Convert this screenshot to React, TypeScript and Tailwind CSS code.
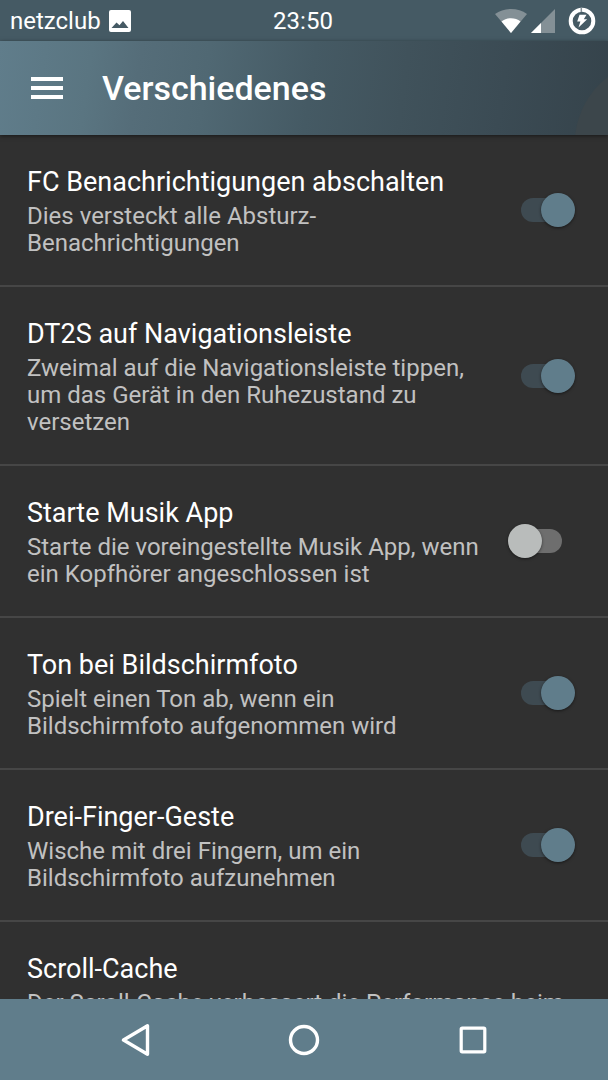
import { useState } from "react"

const settings = [
  {
    id: "fc",
    title: "FC Benachrichtigungen abschalten",
    summary: "Dies versteckt alle Absturz-Benachrichtigungen",
    enabled: true,
  },
  {
    id: "dt2s",
    title: "DT2S auf Navigationsleiste",
    summary:
      "Zweimal auf die Navigationsleiste tippen, um das Gerät in den Ruhezustand zu versetzen",
    enabled: true,
  },
  {
    id: "music",
    title: "Starte Musik App",
    summary:
      "Starte die voreingestellte Musik App, wenn ein Kopfhörer angeschlossen ist",
    enabled: false,
  },
  {
    id: "sound",
    title: "Ton bei Bildschirmfoto",
    summary: "Spielt einen Ton ab, wenn ein Bildschirmfoto aufgenommen wird",
    enabled: true,
  },
  {
    id: "gesture",
    title: "Drei-Finger-Geste",
    summary: "Wische mit drei Fingern, um ein Bildschirmfoto aufzunehmen",
    enabled: true,
  },
]

const StatusBar = () => {
  return (
    <div className="grid h-[41px] shrink-0 grid-cols-[1fr_auto_1fr] items-center bg-[#455a64] pr-3 pl-[10px] text-2xl">
      <div className="flex items-center gap-2">
        <span>netzclub</span>
        <svg className="size-[22px]" viewBox="0 0 22 22" aria-hidden="true">
          <path
            fill="currentColor"
            fillRule="evenodd"
            d="M2 0h18a2 2 0 0 1 2 2v18a2 2 0 0 1-2 2H2a2 2 0 0 1-2-2V2a2 2 0 0 1 2-2zM2.500 18h17l-5.500-7-3.500 4.200-3-2.700z"
          />
        </svg>
      </div>
      <span>23:50</span>
      <div className="flex items-center justify-end">
        <svg className="h-6 w-8" viewBox="0 0 32 24" aria-hidden="true">
          <path fill="#849096" d="M16 24 0 5C4.500 1.700 10 0 16 0s11.500 1.700 16 5z" />
          <path fill="#fff" d="M16 24 6.500 12.600c2.600-2.200 6-3.300 9.500-3.300s6.900 1.100 9.500 3.300z" />
        </svg>
        <svg className="ml-1 size-6" viewBox="0 0 24 24" aria-hidden="true">
          <path fill="#849096" d="M24 0v24H0z" />
          <path fill="#fff" d="M10 14v10H0z" />
        </svg>
        <svg className="ml-[13px] size-7" viewBox="0 0 28 28" aria-hidden="true">
          <circle cx="14" cy="14" r="11.300" fill="none" stroke="#fff" strokeWidth="4" />
          <path stroke="#849096" strokeWidth="1.500" d="M13.300.500v4.500" />
          <path fill="#fff" d="M11.500 7.800h7l-2.700 4.500h3.400l-8.700 8.200 1.900-6H9.200z" />
        </svg>
      </div>
    </div>
  )
}

const Header = () => {
  return (
    <header className="relative z-10 flex h-[94px] shrink-0 items-center gap-[39px] bg-[linear-gradient(98deg,#607d8b_0%,#5a7581_15%,#556d79_23%,#506873_34%,#455a64_51%,#40525b_66%,#3b4b54_82%,#35434b_100%)] px-[31px] shadow-[0_1px_4px_rgba(0,0,0,0.5)]">
      <svg
        className="absolute right-0 bottom-0 h-[58px] w-[33px]"
        viewBox="0 0 33 58"
        aria-hidden="true"
      >
        <path fill="#3c464b" d="M0 58C3 35 14 14 33 0v58z" />
      </svg>
      <button type="button" aria-label="Menü">
        <svg className="h-[22px] w-8" viewBox="0 0 32 22" aria-hidden="true">
          <path fill="#fff" d="M0 0h32v4H0zM0 9h32v4H0zM0 18h32v4H0z" />
        </svg>
      </button>
      <h1 className="text-[34px] font-medium">Verschiedenes</h1>
    </header>
  )
}

const NavigationBar = () => {
  return (
    <nav className="flex h-[81px] shrink-0 items-center justify-center gap-[137px] bg-[#607d8b]">
      <button type="button" aria-label="Zurück">
        <svg className="size-8" viewBox="0 0 32 32" aria-hidden="true">
          <path
            fill="none"
            stroke="#fff"
            strokeWidth="3.400"
            strokeLinejoin="round"
            d="M28.500 1.800v28.400L4.500 16z"
          />
        </svg>
      </button>
      <button type="button" aria-label="Startseite">
        <svg className="size-8" viewBox="0 0 32 32" aria-hidden="true">
          <circle cx="16" cy="16" r="13.500" fill="none" stroke="#fff" strokeWidth="3.400" />
        </svg>
      </button>
      <button type="button" aria-label="Übersicht">
        <svg className="size-8" viewBox="0 0 32 32" aria-hidden="true">
          <rect x="4.200" y="4.200" width="23.600" height="23.600" rx="1" fill="none" stroke="#fff" strokeWidth="3.200" />
        </svg>
      </button>
    </nav>
  )
}

const App = () => {
  const [enabled, setEnabled] = useState<Record<string, boolean>>(
    Object.fromEntries(settings.map((s) => [s.id, s.enabled]))
  )

  return (
    <div className="flex h-screen flex-col bg-[#303030] font-[Roboto,sans-serif] text-white">
      <StatusBar />
      <Header />
      <main className="min-h-0 flex-1 overflow-y-auto [scrollbar-width:none]">
        {settings.map((setting) => (
          <label
            key={setting.id}
            className="flex items-center gap-[27px] border-b-2 border-[#464646] pr-[33px] pl-[27px]"
          >
            <span className="min-w-0 flex-1 pt-[31px] pb-7">
              <span className="block text-[27px] leading-8">{setting.title}</span>
              <span className="mt-[5px] block text-2xl leading-[27px] text-[#c1c1c1]">
                {setting.summary}
              </span>
            </span>
            <input
              type="checkbox"
              role="switch"
              checked={enabled[setting.id]}
              onChange={(e) => setEnabled({ ...enabled, [setting.id]: e.target.checked })}
              className="relative mx-[13px] h-6 w-[41px] shrink-0 appearance-none rounded-full bg-[#6e6e6e] after:absolute after:-top-[5px] after:-left-[13px] after:size-[34px] after:rounded-full after:bg-[#b9bcbb] after:shadow-[0_1px_3px_rgba(0,0,0,0.5)] checked:bg-[#3e4a51] checked:after:left-5 checked:after:bg-[#607d8b]"
            />
          </label>
        ))}
        <div className="px-[27px] pt-[31px] pb-7">
          <p className="text-[27px] leading-8">Scroll-Cache</p>
          <p className="mt-[5px] text-2xl leading-[27px] text-[#c1c1c1]">
            Der Scroll-Cache verbessert die Performance beim
          </p>
        </div>
      </main>
      <NavigationBar />
    </div>
  )
}

export default App
